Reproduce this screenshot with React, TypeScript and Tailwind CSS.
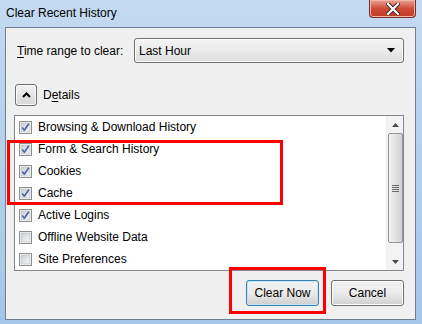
import React from "react";

const items = [
  { label: "Browsing & Download History", checked: true },
  { label: "Form & Search History", checked: true },
  { label: "Cookies", checked: true },
  { label: "Cache", checked: true },
  { label: "Active Logins", checked: true },
  { label: "Offline Website Data", checked: false },
  { label: "Site Preferences", checked: false },
];

function CheckBox({ checked }: { checked: boolean }) {
  return (
    <svg width="13" height="13" viewBox="0 0 13 13" className="shrink-0">
      <defs>
        <linearGradient id="cbg" x1="0" y1="0" x2="1" y2="1">
          <stop offset="0" stopColor="#cbcfd5" />
          <stop offset="1" stopColor="#f6f6f6" />
        </linearGradient>
      </defs>
      <rect x="0.5" y="0.5" width="12" height="12" fill="#fff" stroke="#8e8f8f" />
      <rect x="2" y="2" width="9" height="9" fill="url(#cbg)" stroke="#aeb3b9" strokeWidth="0.6" />
      {checked && (
        <path
          d="M3.2 6.6 L5.3 9.2 L9.8 2.8"
          fill="none"
          stroke="#4b61a0"
          strokeWidth="1.6"
          strokeLinejoin="round"
        />
      )}
    </svg>
  );
}

function WinButton({ children, focused }: { children: React.ReactNode; focused?: boolean }) {
  return (
    <div
      className={`w-[73px] h-[26px] rounded-[3px] border flex items-center justify-center text-[12px] text-black bg-gradient-to-b from-[#f2f2f2] via-[#ebebeb] to-[#cfcfcf] ${
        focused ? "border-[#3c7fb1] shadow-[inset_0_0_0_1px_#bfe6f9]" : "border-[#707070] shadow-[inset_0_0_0_1px_#fcfcfc]"
      }`}
    >
      {children}
    </div>
  );
}

export default function App() {
  return (
    <div
      className="relative w-[422px] h-[324px] overflow-hidden bg-gradient-to-b from-[#c4daf2] via-[#b2cfee] to-[#a5c5e9] flex flex-col"
      style={{ fontFamily: '"Liberation Sans", Arial, sans-serif' }}
    >
      {/* title bar */}
      <div className="h-[27px] flex items-start justify-between shrink-0">
        <div className="pl-[6px] pt-[6px] text-[12px] text-black leading-[14px]">Clear Recent History</div>
        <div className="mr-[6px] w-[47px] h-[18px] rounded-b-[4px] border border-t-0 border-[#7a2a22] bg-gradient-to-b from-[#e8a393] via-[#cf4b37] to-[#c23a25] flex items-center justify-center shadow-[inset_0_0_0_1px_#f1b6a7]">
          <svg width="14" height="12" viewBox="0 0 14 12">
            <path d="M2 1 L12 11 M12 1 L2 11" stroke="#3b1d1a" strokeWidth="4" strokeLinecap="square" />
            <path d="M2 1 L12 11 M12 1 L2 11" stroke="#ffffff" strokeWidth="2.2" strokeLinecap="square" />
          </svg>
        </div>
      </div>

      {/* client area */}
      <div className="ml-[5px] mr-[6px] h-[293px] border border-[#6f7f90] bg-[#f0f0f0] flex flex-col text-[12px] text-black">
        <div className="flex items-center mt-[10px] pl-[11px] pr-[11px]">
          <span className="w-[117px]">
            <span className="underline underline-offset-2">T</span>ime range to clear:
          </span>
          <div className="flex-1 h-[25px] rounded-[3px] border border-[#707070] bg-gradient-to-b from-[#f3f3f3] via-[#ebebeb] to-[#dcdcdc] flex items-center justify-between pl-[4px] pr-[8px] shadow-[inset_0_0_0_1px_#fbfbfb]">
            <span>Last Hour</span>
            <svg width="8" height="5" viewBox="0 0 8 5">
              <path d="M0 0 H8 L4 4.5 Z" fill="#000" />
            </svg>
          </div>
        </div>

        <div className="flex items-center mt-[21px] ml-[9px]">
          <div className="w-[22px] h-[22px] rounded-[3px] border border-[#707070] bg-gradient-to-b from-[#f2f2f2] to-[#d8d8d8] flex items-center justify-center shadow-[inset_0_0_0_1px_#fafafa]">
            <svg width="9" height="6" viewBox="0 0 9 6">
              <path d="M1 5 L4.5 1.5 L8 5" fill="none" stroke="#000" strokeWidth="2" />
            </svg>
          </div>
          <span className="ml-[6px]">
            D<span className="underline underline-offset-2">e</span>tails
          </span>
        </div>

        <div className="ml-[8px] mt-[9px] w-[390px] h-[156px] border border-[#828790] bg-white flex">
          <div className="flex-1 flex flex-col pl-[4px]">
            {items.map((it) => (
              <div key={it.label} className="h-[22px] flex items-center gap-[6px]">
                <CheckBox checked={it.checked} />
                <span>{it.label}</span>
              </div>
            ))}
          </div>
          <div className="w-[17px] bg-[#f3f3f3] border-l border-[#ededed] flex flex-col items-center">
            <div className="h-[17px] flex items-center justify-center">
              <svg width="7" height="4" viewBox="0 0 7 4">
                <path d="M3.5 0 L7 4 H0 Z" fill="#4d4d4d" />
              </svg>
            </div>
            <div className="w-[15px] h-[110px] rounded-[2px] border border-[#959595] bg-gradient-to-r from-[#f3f3f3] via-[#e2e2e2] to-[#cfcfcf] flex flex-col items-center justify-center gap-[1px]">
              <div className="w-[7px] h-px bg-[#6a6a6a]" />
              <div className="w-[7px] h-px bg-[#6a6a6a]" />
              <div className="w-[7px] h-px bg-[#6a6a6a]" />
              <div className="w-[7px] h-px bg-[#6a6a6a]" />
            </div>
            <div className="flex-1 flex items-end justify-center pb-[6px]">
              <svg width="7" height="4" viewBox="0 0 7 4">
                <path d="M0 0 H7 L3.5 4 Z" fill="#4d4d4d" />
              </svg>
            </div>
          </div>
        </div>

        <div className="flex justify-end gap-[12px] mt-[9px] pr-[11px]">
          <WinButton focused>Clear Now</WinButton>
          <WinButton>Cancel</WinButton>
        </div>
      </div>

      {/* annotations */}
      <div className="absolute left-[7px] top-[140px] w-[276px] h-[65px] border-[3px] border-[#ff0000]" />
      <div className="absolute left-[229px] top-[267px] w-[97px] h-[47px] border-[3px] border-[#ff0000]" />
    </div>
  );
}
